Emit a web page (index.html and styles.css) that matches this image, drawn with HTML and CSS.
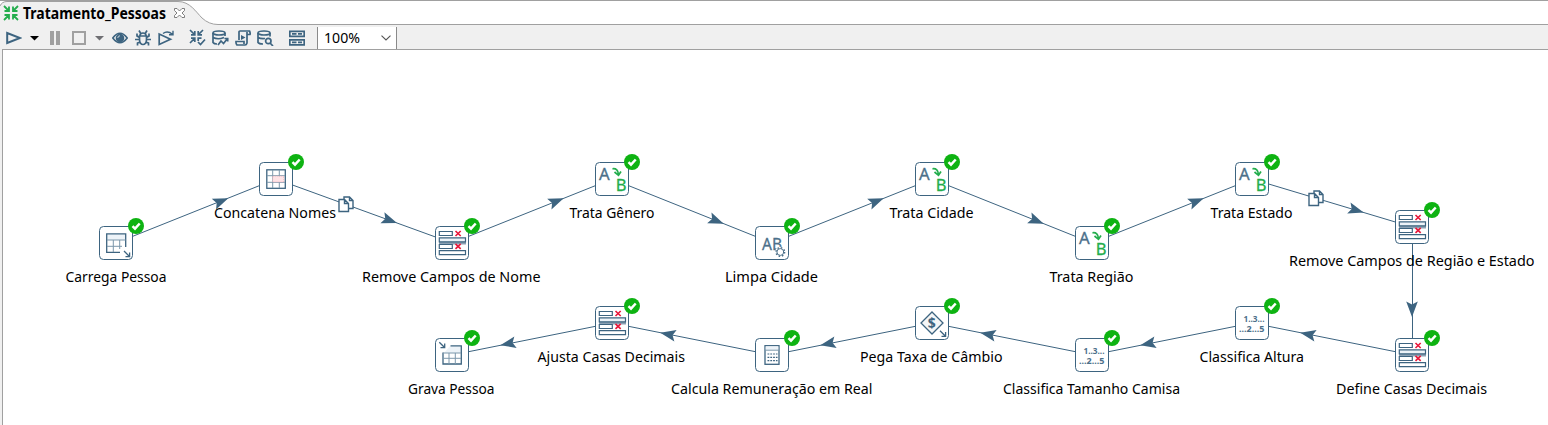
FILE: index.html
```html
<!DOCTYPE html>
<html lang="pt-BR">
<head>
<meta charset="utf-8">
<title>Tratamento_Pessoas</title>
<link rel="stylesheet" href="styles.css">
</head>
<body>
<div class="app">
  <header class="tabs">
    <svg class="tab-shape" width="1548" height="25" viewBox="0 0 1548 25">
      <path class="tab-fill" d="M0 25V6Q1 1.500 6 1.500H178C190 1.500 196 12 202 18Q209 24.500 218 24.500V25Z"/>
      <path class="tab-line" d="M0 .5H1548M0 6Q2 1.500 7 1.500H178C190 1.500 196 12 202 18Q209 24.500 218 24.500H1548"/>
    </svg>
    <div class="tab">
      <svg class="tab-icon" width="16" height="16" viewBox="0 0 16 16"><use href="#converge"/></svg>
      <svg class="tab-title" width="146" height="24"><text x="0" y="19" textLength="143" lengthAdjust="spacingAndGlyphs">Tratamento_Pessoas</text></svg>
      <svg class="tab-close" width="11" height="11" viewBox="0 0 11 11"><path d="M.5 .5H3L5.500 3L8 .5H10.500V2.500L8 5L10.500 7.500V9.500H8L5.500 7L3 9.500H.5V7.500L3 5L.5 2.500Z"/></svg>
    </div>
  </header>
  <nav class="toolbar">
    <svg class="tool play" width="16" height="16" viewBox="0 0 16 16"><path d="M1.200 3V13L14 8Z"/></svg>
    <svg class="caret dark" width="9" height="5" viewBox="0 0 9 5"><path d="M0 0H9L4.500 4.500Z"/></svg>
    <svg class="tool pause" width="10" height="16" viewBox="0 0 10 16"><path d="M0 1H4V15H0ZM6 1H10V15H6Z"/></svg>
    <svg class="tool stop" width="14" height="16" viewBox="0 0 14 16"><path d="M1 2H13V14H1Z"/></svg>
    <svg class="caret" width="9" height="5" viewBox="0 0 9 5"><path d="M0 0H9L4.500 4.500Z"/></svg>
    <svg class="tool eye" width="16" height="16" viewBox="0 0 16 16"><path d="M.8 8Q8-1.500 15.200 8Q8 17.500 .8 8Z"/><circle class="solid" cx="8" cy="8" r="4.300"/><path class="glint" d="M5.800 8Q5.800 5.800 8 5.800"/></svg>
    <svg class="tool bug" width="16" height="16" viewBox="0 0 16 16"><path d="M4.500 6H11.500V10Q11 14.500 8 14.500Q5 14.500 4.500 10ZM5 5.500Q5 3 8 3Q11 3 11 5.500M5.500 3L4 .5M10.500 3L12 .5M4.500 7.500L2 6V3.500M11.500 7.500L14 6V3.500M0 9.500H4.500M11.500 9.500H16M5 12L2.500 13V15.500M11 12L13.500 13V15.500"/></svg>
    <svg class="tool replay" width="17" height="16" viewBox="0 0 17 16"><path d="M1.200 4V14.500L12.500 9.200Z"/><path class="swoop" d="M5 3.500Q9.500 .3 14.500 4.300M15 .8V4.800H11"/></svg>
    <svg class="tool verify" width="17" height="17" viewBox="0 0 17 17"><path d="M1 1L5.500 5.500M2 5.800H5.800V2M14 1L9.500 5.500M13 5.800H9.200V2M1 14L5.500 9.500M2 9.200H5.800V13M9.200 12V9.200H12.500M9 13L11.500 15.500L16 10.500"/></svg>
    <svg class="tool impact" width="17" height="16" viewBox="0 0 17 16"><path d="M13 6V3M1 3V12.500Q2 14 5 14M1 7.500Q6 10 12 7.500M6 15L9 11L11.500 13.500L15.500 8.500M12.500 8.500H15.700V11.500"/><ellipse cx="7" cy="3" rx="6" ry="2"/></svg>
    <svg class="tool script" width="16" height="16" viewBox="0 0 16 16"><path d="M4 10V2Q4 1 5 1H14.500Q15.500 3 15 4.500H12V13Q11.500 15 10 15H2Q.8 14 1 11.500H9V14M12 4V2"/><path class="solid" d="M6 5L10.500 7.500L6 10Z"/></svg>
    <svg class="tool sql" width="17" height="16" viewBox="0 0 17 16"><path d="M13 6.500V3M1 3V12.500Q2 14 6 14M1 7.500Q4 9 8 8.500M13 13L16 16"/><ellipse cx="7" cy="3" rx="6" ry="2"/><circle cx="11.300" cy="11" r="2.700"/></svg>
    <svg class="tool results" width="16" height="16" viewBox="0 0 16 16"><path d="M.8 1.300H15.200V6.300H.8ZM.8 9.800H15.200V14.800H.8ZM3 3.800H7.500M9 3.800H13M3 12.300H7.500M9 12.300H13"/></svg>
    <div class="zoom">
      <svg width="38" height="22"><text x="0" y="15.500" textLength="36" lengthAdjust="spacingAndGlyphs">100%</text></svg>
      <svg class="chevron" width="10" height="6" viewBox="0 0 10 6"><path d="M.5 .7L5 5L9.500 .7"/></svg>
    </div>
  </nav>
  <main class="canvas">
    <svg class="diagram" width="1545" height="375" viewBox="3 50 1545 375">
      <defs>
        <g id="converge" class="converge"><path d="M1 1L6 6M1.500 6H6V1.500M15 1L10 6M14.500 6H10V1.500M1 15L6 10M1.500 10H6V14.500M15 15L10 10M14.500 10H10V14.500"/></g>
        <path id="arrow" class="arrow" d="M0 0L-15.500 -5.800L-12.500 0L-15.500 5.800Z"/>
        <g id="box">
          <rect class="frame" x="-.5" y="-.5" width="33" height="33" rx="4"/>
        </g>
        <g id="badge"><circle class="ok" cx="36" cy="-1" r="8"/><path class="tick" d="M32.500 -.8L35 1.700L39.700 -3.500"/></g>
        <g id="copy"><path class="sheet" d="M6 1H11.500L15 4.500V12.500H6ZM11.500 1V4.500H15"/><path class="sheet" d="M1 3.500H6.500L10.500 7.500V15.500H1ZM6.500 3.500V7.500H10.500"/></g>
        <g id="select" class="ink">
          <path class="band" d="M3 14.500H30V17.500H3Z"/>
          <path class="bar" d="M3.300 4.500H16.300V8.500H3.300ZM3.300 17.500H16.300V21.500H3.300ZM3.300 23.700H29.500V27.700H3.300Z"/>
          <path class="bar tint" d="M3.300 10.800H29.500V14.800H3.300Z"/>
          <path class="del" d="M19.500 4L24.700 9M24.700 4L19.500 9M19.500 16.900L24.700 21.900M24.700 16.900L19.500 21.900"/>
        </g>
        <g id="map">
          <text class="glyph" x="3" y="17" textLength="10.700" lengthAdjust="spacingAndGlyphs">A</text>
          <text class="glyph green" x="19.700" y="27.600" textLength="10.800" lengthAdjust="spacingAndGlyphs">B</text>
          <path class="turn" d="M16.500 5.800Q22 5 22.500 11.500M18.500 9L22.500 12.300L25 8.500"/>
        </g>
        <g id="range">
          <text class="digits" x="7.500" y="14.700" textLength="21" lengthAdjust="spacingAndGlyphs">1..3...</text>
          <text class="digits" x="3" y="24.700" textLength="25.500" lengthAdjust="spacingAndGlyphs">...2...5</text>
        </g>
        <g id="input" class="ink">
          <rect class="tint plain" x="7" y="7" width="19" height="6"/>
          <path d="M20 25.300H6.700V6.800H25.700V20"/><path class="thin" d="M7 13H25.500M7 19.300H22M13.300 13V25M19.700 13V22"/>
          <path d="M24 24L29.500 29.500M25.500 29.600H29.600V25.500"/>
        </g>
        <g id="output" class="ink">
          <path class="tint plain" d="M14 7H25V14H8Z"/>
          <path d="M14.500 6.800H25.300V25H7V13.500"/><path class="thin" d="M7 14H25M7 19.300H25M13 14V25M19.300 14V25"/>
          <path d="M3.300 3.300L8.300 8.300M4.500 8.600H8.700V4.500"/>
        </g>
        <g id="concat" class="ink">
          <rect x="6.800" y="6.800" width="18.500" height="18.500"/><path class="thin" d="M7 12.700H25M7 19.300H25M12.700 7V25M19.300 7V25"/>
          <rect class="merge" x="12.700" y="13.200" width="11" height="5.800"/>
        </g>
        <g id="calc" class="ink">
          <rect x="9" y="6.700" width="14" height="18.600"/><rect class="tint plain" x="9.700" y="7.300" width="12.600" height="3.500"/><path class="thin" d="M9 11.200H23"/>
          <path class="dots" d="M11.500 15H21.500M11.500 18.300H21.500M11.500 21.700H21.500"/>
        </g>
        <g id="rate" class="ink">
          <path class="diamond" d="M16 5L27 16L16 27L5 16Z"/>
          <text class="dollar" x="11.800" y="21.200">$</text>
          <path d="M24 23.700L29.500 29.200M25.500 29.400H29.600V25"/>
        </g>
        <g id="clean">
          <text class="glyph" x="6" y="22.500" textLength="20" lengthAdjust="spacingAndGlyphs">AB</text>
          <circle class="halo" cx="24.300" cy="25" r="5.300"/>
          <circle class="teeth" cx="24.300" cy="25" r="4.300"/>
          <circle class="gear" cx="24.300" cy="25" r="3.400"/>
        </g>
      </defs>

      <g class="links">
        <path d="M116 243L276 179L452 243L612 179L772 243L932 179L1092 243L1252 179L1412 227M1412 355L1252 323L1092 355L932 323L772 355L612 323L452 355"/>
        <path d="M1412.500 227V355"/>
      </g>
      <use href="#arrow" transform="translate(228.300 198.300) rotate(-21.800)"/>
      <use href="#arrow" transform="translate(397 223) rotate(20)"/>
      <use href="#arrow" transform="translate(563.700 198.300) rotate(-21.800)"/>
      <use href="#arrow" transform="translate(723.700 223.700) rotate(21.800)"/>
      <use href="#arrow" transform="translate(883.700 198.300) rotate(-21.800)"/>
      <use href="#arrow" transform="translate(1043.700 223.700) rotate(21.800)"/>
      <use href="#arrow" transform="translate(1203.700 198.300) rotate(-21.800)"/>
      <use href="#arrow" transform="translate(1363.700 212.500) rotate(16.700)"/>
      <use href="#arrow" transform="translate(1412 317) rotate(90)"/>
      <use href="#arrow" transform="translate(1300.300 332.700) rotate(191.300)"/>
      <use href="#arrow" transform="translate(1140.300 345.300) rotate(168.700)"/>
      <use href="#arrow" transform="translate(980.300 332.700) rotate(191.300)"/>
      <use href="#arrow" transform="translate(820.300 345.300) rotate(168.700)"/>
      <use href="#arrow" transform="translate(660.300 332.700) rotate(191.300)"/>
      <use href="#arrow" transform="translate(500.300 345.300) rotate(168.700)"/>

      <g transform="translate(100 227)"><use href="#box"/><use href="#input"/><use href="#badge"/></g>
      <g transform="translate(260 163)"><use href="#box"/><use href="#concat"/><use href="#badge"/></g>
      <g transform="translate(436 227)"><use href="#box"/><use href="#select"/><use href="#badge"/></g>
      <g transform="translate(596 163)"><use href="#box"/><use href="#map"/><use href="#badge"/></g>
      <g transform="translate(756 227)"><use href="#box"/><use href="#clean"/><use href="#badge"/></g>
      <g transform="translate(916 163)"><use href="#box"/><use href="#map"/><use href="#badge"/></g>
      <g transform="translate(1076 227)"><use href="#box"/><use href="#map"/><use href="#badge"/></g>
      <g transform="translate(1236 163)"><use href="#box"/><use href="#map"/><use href="#badge"/></g>
      <g transform="translate(1396 211)"><use href="#box"/><use href="#select"/><use href="#badge"/></g>
      <g transform="translate(1396 339)"><use href="#box"/><use href="#select"/><use href="#badge"/></g>
      <g transform="translate(1236 307)"><use href="#box"/><use href="#range"/><use href="#badge"/></g>
      <g transform="translate(1076 339)"><use href="#box"/><use href="#range"/><use href="#badge"/></g>
      <g transform="translate(916 307)"><use href="#box"/><use href="#rate"/><use href="#badge"/></g>
      <g transform="translate(756 339)"><use href="#box"/><use href="#calc"/><use href="#badge"/></g>
      <g transform="translate(596 307)"><use href="#box"/><use href="#select"/><use href="#badge"/></g>
      <g transform="translate(436 339)"><use href="#box"/><use href="#output"/><use href="#badge"/></g>

      <g class="labels">
        <text x="65.500" y="282" textLength="101" lengthAdjust="spacingAndGlyphs">Carrega Pessoa</text>
        <text x="214" y="218" textLength="122" lengthAdjust="spacingAndGlyphs">Concatena Nomes</text>
        <text x="362" y="282" textLength="178.500" lengthAdjust="spacingAndGlyphs">Remove Campos de Nome</text>
        <text x="569.500" y="218" textLength="85" lengthAdjust="spacingAndGlyphs">Trata Gênero</text>
        <text x="725" y="282" textLength="93" lengthAdjust="spacingAndGlyphs">Limpa Cidade</text>
        <text x="889.500" y="218" textLength="84" lengthAdjust="spacingAndGlyphs">Trata Cidade</text>
        <text x="1049.500" y="282" textLength="84" lengthAdjust="spacingAndGlyphs">Trata Região</text>
        <text x="1210.500" y="218" textLength="82" lengthAdjust="spacingAndGlyphs">Trata Estado</text>
        <text x="1289" y="266" textLength="245.500" lengthAdjust="spacingAndGlyphs">Remove Campos de Região e Estado</text>
        <text x="1336" y="394" textLength="151" lengthAdjust="spacingAndGlyphs">Define Casas Decimais</text>
        <text x="1199.500" y="362" textLength="104.500" lengthAdjust="spacingAndGlyphs">Classifica Altura</text>
        <text x="1003" y="394" textLength="177" lengthAdjust="spacingAndGlyphs">Classifica Tamanho Camisa</text>
        <text x="860" y="362" textLength="142.500" lengthAdjust="spacingAndGlyphs">Pega Taxa de Câmbio</text>
        <text x="671" y="394" textLength="201.500" lengthAdjust="spacingAndGlyphs">Calcula Remuneração em Real</text>
        <text x="537.500" y="362" textLength="147.500" lengthAdjust="spacingAndGlyphs">Ajusta Casas Decimais</text>
        <text x="408" y="394" textLength="86.500" lengthAdjust="spacingAndGlyphs">Grava Pessoa</text>
      </g>
      <use href="#copy" transform="translate(338 196)"/>
      <use href="#copy" transform="translate(1308 190)"/>
    </svg>
  </main>
</div>
</body>
</html>
```
FILE: styles.css
```css
* { box-sizing: border-box; }
body { margin: 0; background: #f0f0f0; font-family: "Noto Sans", "Open Sans", sans-serif; overflow: hidden; }
svg { display: block; flex: none; }
.app { display: flex; flex-direction: column; width: 1548px; height: 425px; }

.tabs { display: grid; height: 25px; background: #fff; }
.tab-shape, .tab { grid-area: 1 / 1; }
.tab-fill { fill: #f0f0f0; }
.tab-line { fill: none; stroke: #a0a0a0; }
.tab { display: flex; align-items: flex-start; padding-left: 3px; }
.tab-icon { margin-top: 5px; }
.tab-title { margin-left: 4px; overflow: visible; }
.tab-title text { font-size: 15.500px; font-weight: 700; fill: #000; }
.tab-close { margin: 8px 0 0 5px; fill: #fff; stroke: #707070; stroke-width: .9; }
.converge { fill: none; stroke: #23ad4c; stroke-width: 1.8; }

.toolbar { display: flex; align-items: center; height: 24px; padding: 1px 0 0 6px; }
.tool { fill: none; stroke: #3d6480; stroke-width: 1.700; }
.tool .solid { fill: #3d6480; stroke: none; }
.play { stroke-width: 2; }
.caret { fill: #6f6f73; margin: 1px 0 0 9px; }
.caret.dark { fill: #000; margin-left: 8px; }
.pause { fill: #a0a0a0; stroke: none; margin-left: 11px; }
.stop { stroke: #a0a0a0; stroke-width: 2; margin-left: 12px; }
.eye { margin-left: 8px; }
.tool .glint { stroke: #c8d4de; stroke-width: 1; }
.bug { margin-left: 7px; }
.replay { margin-left: 7px; }
.swoop { stroke-width: 1.400; }
.verify { margin-left: 14px; }
.impact { margin-left: 6px; }
.script { margin-left: 6px; }
.sql { margin-left: 6px; }
.results { margin-left: 15px; }
.zoom { display: flex; align-items: center; justify-content: space-between; width: 80px; height: 22px; margin-left: 12px; padding: 0 5px 0 6px; background: #fff; border: solid #8a8a8a; border-width: 0 1px; }
.zoom text { font-size: 15px; fill: #000; }
.chevron { fill: none; stroke: #555; stroke-width: 1.1; }

.canvas { flex: 1; margin-left: 2px; background: #fff; border: solid #a0a0a0; border-width: 1px 0 0 1px; }
.links { fill: none; stroke: #3d6480; stroke-width: 1; }
.arrow { fill: #3d6480; }
.frame { fill: #fff; stroke: #3d6480; }
.ok { fill: #0eb312; }
.tick { fill: none; stroke: #fff; stroke-width: 2.500; }
.sheet { fill: #fff; stroke: #3d6480; stroke-width: 1.400; }
.labels { font-size: 15px; fill: #000; }
.ink { fill: none; stroke: #3d6480; stroke-width: 1.300; }
.thin { stroke: #7c98ac; stroke-width: 1; }
.tint { fill: #edf3f8; }
.plain { stroke: none; }
.bar { stroke-width: 1.200; }
.band { fill: #8ba1b3; stroke: none; }
.del { stroke: #e8173a; stroke-width: 1.600; }
.glyph { font-size: 17px; fill: #4c708a; stroke: #4c708a; stroke-width: .3; }
.green { fill: #23ad4c; stroke: #23ad4c; }
.turn { fill: none; stroke: #23ad4c; stroke-width: 1.700; }
.digits { font-size: 9.600px; font-weight: 700; fill: #4c708a; }
.merge { fill: #ffe3e6; stroke: #e9a9b2; stroke-width: .8; stroke-dasharray: 1 1; }
.dots { stroke-width: 1.200; stroke-dasharray: 1.800 1; }
.diamond { fill: #f4f6f7; }
.dollar { font-size: 14px; font-weight: 700; fill: #3d6480; stroke: none; }
.halo { fill: #fff; }
.teeth { fill: none; stroke: #4c708a; stroke-width: 1.500; stroke-dasharray: 1.500 1.877; }
.gear { fill: none; stroke: #4c708a; stroke-width: 1; }
```
